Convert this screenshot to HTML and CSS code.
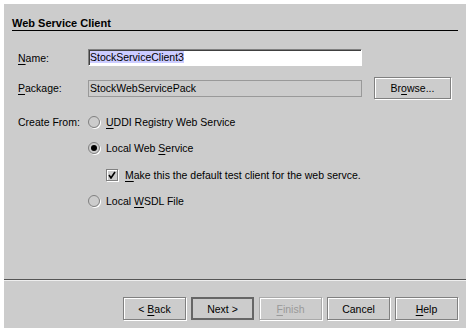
FILE: index.html
```html
<!DOCTYPE html>
<html>
<head>
<meta charset="utf-8">
<link rel="stylesheet" href="styles.css">
</head>
<body>
<div class="dialog">
  <div class="title">Web Service Client</div>
  <div class="form">
    <div class="row row-name">
      <label class="lbl"><u>N</u>ame:</label>
      <div class="field field-edit"><span class="sel">StockServiceClient3</span></div>
    </div>
    <div class="row row-pkg">
      <label class="lbl"><u>P</u>ackage:</label>
      <div class="field field-disabled">StockWebServicePack</div>
      <button class="btn btn-browse">Br<u>o</u>wse...</button>
    </div>
    <div class="row row-radio first">
      <label class="lbl">Create From:</label>
      <span class="radio"></span>
      <span class="opt"><u>U</u>DDI Registry Web Service</span>
    </div>
    <div class="row row-radio">
      <span class="indent"></span>
      <span class="radio on"><span class="dot"></span></span>
      <span class="opt">Local Web <u>S</u>ervice</span>
    </div>
    <div class="row row-check">
      <span class="indent2"></span>
      <span class="check"><svg width="8" height="8" viewBox="0 0 8 8"><path d="M1 4 L3 7 L7 1" fill="none" stroke="#000" stroke-width="1.6"/></svg></span>
      <span class="opt"><u>M</u>ake this the default test client for the web servce.</span>
    </div>
    <div class="row row-radio">
      <span class="indent"></span>
      <span class="radio"></span>
      <span class="opt">Local <u>W</u>SDL File</span>
    </div>
  </div>
  <div class="sep"></div>
  <div class="buttons">
    <button class="btn">&lt; <u>B</u>ack</button>
    <button class="btn btn-default">Next &gt;</button>
    <button class="btn btn-disabled"><u>F</u>inish</button>
    <button class="btn">Cancel</button>
    <button class="btn"><u>H</u>elp</button>
  </div>
</div>
</body>
</html>
```
FILE: styles.css
```css
html, body {
  margin: 0;
  padding: 0;
  background: #ffffff;
}
body {
  font-family: "Liberation Sans", Arial, sans-serif;
  font-size: 10.5px;
  color: #000;
}
.dialog {
  margin: 4px;
  width: 462px;
  height: 324px;
  background: #cccccc;
  display: flex;
  flex-direction: column;
}
.title {
  margin: 12px 8px 0 8px;
  height: 14px;
  line-height: 14px;
  font-size: 11px;
  font-weight: bold;
  border-bottom: 1px solid #000;
}
.form {
  flex: 1;
  padding-left: 14px;
}
u {
  text-decoration: underline;
  text-underline-offset: 2px;
}
.row {
  display: flex;
  align-items: center;
}
.lbl {
  width: 70px;
  flex: none;
}
.row-name {
  margin-top: 18px;
  height: 17px;
}
.field {
  width: 274px;
  height: 17px;
  box-sizing: border-box;
  line-height: 15px;
  padding-left: 1px;
  white-space: nowrap;
}
.field-edit {
  background: #fff;
  border: 1px solid #808080;
  border-right-color: #fff;
  border-bottom-color: #fff;
  box-shadow: inset 1px 1px 0 #404040;
}
.sel {
  background: #ccccff;
}
.field-disabled {
  border: 1px solid #999;
  background: #cccccc;
}
.row-pkg {
  margin-top: 11px;
  height: 22px;
}
.btn {
  font: inherit;
  color: #000;
  background: #cccccc;
  border: 1px solid #808080;
  box-shadow: 1px 1px 0 #fff, inset 1px 1px 0 #fff;
  height: 23px;
  width: 63px;
  padding: 0;
  margin: 0;
}
.btn-browse {
  margin-left: 12px;
  width: 77px;
  height: 22px;
}
.row-radio {
  height: 16px;
  margin-top: 10px;
}
.row-radio.first {
  margin-top: 15px;
}
.indent {
  width: 70px;
  flex: none;
}
.radio {
  width: 12px;
  height: 12px;
  box-sizing: border-box;
  border-radius: 50%;
  border: 1px solid #808080;
  box-shadow: 1px 1px 0 #fff;
  margin-right: 6px;
  display: flex;
  align-items: center;
  justify-content: center;
  flex: none;
}
.dot {
  width: 6px;
  height: 6px;
  border-radius: 50%;
  background: #000;
}
.row-check {
  height: 16px;
  margin-top: 11px;
}
.indent2 {
  width: 88px;
  flex: none;
}
.check {
  width: 12px;
  height: 12px;
  box-sizing: border-box;
  border: 1px solid #808080;
  box-shadow: 1px 1px 0 #fff, inset 1px 1px 0 #fff;
  margin-right: 7px;
  display: flex;
  align-items: center;
  justify-content: center;
  flex: none;
}
.sep {
  height: 1px;
  background: #555;
  border-bottom: 1px solid #eee;
}
.buttons {
  display: flex;
  justify-content: flex-end;
  gap: 5px;
  padding: 16px 8px 8px 0;
}
.btn-default {
  border: 2px solid #666;
  box-shadow: none;
}
.btn-disabled {
  color: #999;
  border-color: #aaa;
}
```
